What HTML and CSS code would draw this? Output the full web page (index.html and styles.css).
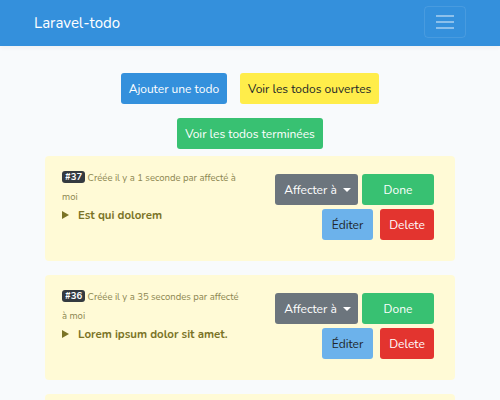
FILE: index.html
```html
<!DOCTYPE html>
<html lang="fr">
<head>
<meta charset="utf-8">
<title>Laravel-todo</title>
<link rel="stylesheet" href="styles.css">
</head>
<body>
<nav class="navbar">
  <a class="brand" href="#">Laravel-todo</a>
  <button class="toggler" aria-label="Menu">
    <svg width="20" height="14" viewBox="0 0 20 14"><g stroke="rgba(255,255,255,0.55)" stroke-width="1.6"><line x1="1" y1="1" x2="19" y2="1"/><line x1="1" y1="7" x2="19" y2="7"/><line x1="1" y1="13" x2="19" y2="13"/></g></svg>
  </button>
</nav>
<main class="main">
  <div class="actions">
    <a class="btn btn-primary" href="#">Ajouter une todo</a>
    <a class="btn btn-warning" href="#">Voir les todos ouvertes</a>
    <a class="btn btn-success" href="#">Voir les todos terminées</a>
  </div>
  <div class="todo">
    <div class="todo-info">
      <p class="meta"><span class="badge">#37</span> Créée il y a 1 seconde par affecté à moi</p>
      <p class="title"><span class="arrow"></span>Est qui dolorem</p>
    </div>
    <div class="todo-buttons">
      <div class="btn-row">
        <button class="btn btn-secondary">Affecter à <span class="caret"></span></button>
        <button class="btn btn-success btn-done">Done</button>
      </div>
      <div class="btn-row btn-row-wide">
        <button class="btn btn-info">Éditer</button>
        <button class="btn btn-danger">Delete</button>
      </div>
    </div>
  </div>
  <div class="todo">
    <div class="todo-info">
      <p class="meta"><span class="badge">#36</span> Créée il y a 35 secondes par affecté à moi</p>
      <p class="title"><span class="arrow"></span>Lorem ipsum dolor sit amet.</p>
    </div>
    <div class="todo-buttons">
      <div class="btn-row">
        <button class="btn btn-secondary">Affecter à <span class="caret"></span></button>
        <button class="btn btn-success btn-done">Done</button>
      </div>
      <div class="btn-row btn-row-wide">
        <button class="btn btn-info">Éditer</button>
        <button class="btn btn-danger">Delete</button>
      </div>
    </div>
  </div>
  <div class="todo todo-last"></div>
</main>
</body>
</html>
```
FILE: styles.css
```css
* { box-sizing: border-box; }
html, body { margin: 0; }
body {
  background: #f8fafc;
  font-family: "Nunito", "Lato", "Liberation Sans", sans-serif;
  font-size: 12px;
  color: #212529;
  overflow: hidden;
  height: 400px;
}
.navbar {
  height: 46px;
  background: #3490dc;
  display: flex;
  align-items: center;
  justify-content: space-between;
  padding: 0 34px;
  box-shadow: 0 2px 4px rgba(0,0,0,0.04);
}
.brand {
  color: #fff;
  text-decoration: none;
  font-size: 15px;
}
.toggler {
  width: 42px;
  height: 32px;
  margin-top: -2px;
  background: transparent;
  border: 1px solid rgba(255,255,255,0.1);
  border-radius: 4px;
  display: flex;
  align-items: center;
  justify-content: center;
  padding: 0;
}
.main {
  padding: 27px 45px 0;
}
.actions {
  display: flex;
  flex-wrap: wrap;
  justify-content: center;
  gap: 14px 13px;
  padding: 0 65px;
  margin-bottom: 7px;
}
.btn {
  display: inline-flex;
  align-items: center;
  justify-content: center;
  height: 31px;
  padding: 0 8px;
  border: 0;
  border-radius: 3px;
  font-family: inherit;
  font-size: 12px;
  text-decoration: none;
  color: #fff;
  white-space: nowrap;
}
.btn-primary { background: #3490dc; }
.btn-warning { background: #ffed4a; color: #212529; }
.btn-success { background: #38c172; }
.btn-secondary { background: #6c757d; }
.btn-info { background: #6cb2eb; color: #212529; width: 51px; }
.btn-danger { background: #e3342f; width: 54px; }
.todo {
  background: #fffad6;
  border-radius: 4px;
  height: 105px;
  margin-bottom: 14px;
  padding: 12px 21px 0 17px;
  display: flex;
  justify-content: space-between;
}
.todo-info {
  width: 180px;
}
.meta {
  margin: 0;
  font-size: 9.5px;
  line-height: 19px;
  color: #8c8650;
}
.badge {
  display: inline-block;
  vertical-align: 1px;
  background: #343a40;
  color: #fff;
  font-weight: 700;
  font-size: 9.5px;
  line-height: 12px;
  padding: 0 3px;
  border-radius: 3px;
}
.title {
  margin: 0;
  font-weight: 700;
  font-size: 11.5px;
  line-height: 18px;
  color: #7a7326;
  display: flex;
  align-items: center;
}
.arrow {
  width: 0;
  height: 0;
  border-left: 7px solid #7a7326;
  border-top: 4.5px solid transparent;
  border-bottom: 4.5px solid transparent;
  margin-right: 9px;
}
.todo-buttons {
  padding-top: 6px;
  display: flex;
  flex-direction: column;
  align-items: flex-end;
  gap: 4px;
}
.btn-row {
  display: flex;
  gap: 4px;
}
.btn-row-wide { gap: 7px; }
.btn-done { width: 72px; }
.btn-secondary { padding: 0 7px 0 9px; width: 83px; }
.caret {
  display: inline-block;
  width: 0;
  height: 0;
  margin-left: 6px;
  border-top: 4px solid #fff;
  border-left: 4px solid transparent;
  border-right: 4px solid transparent;
}
```
